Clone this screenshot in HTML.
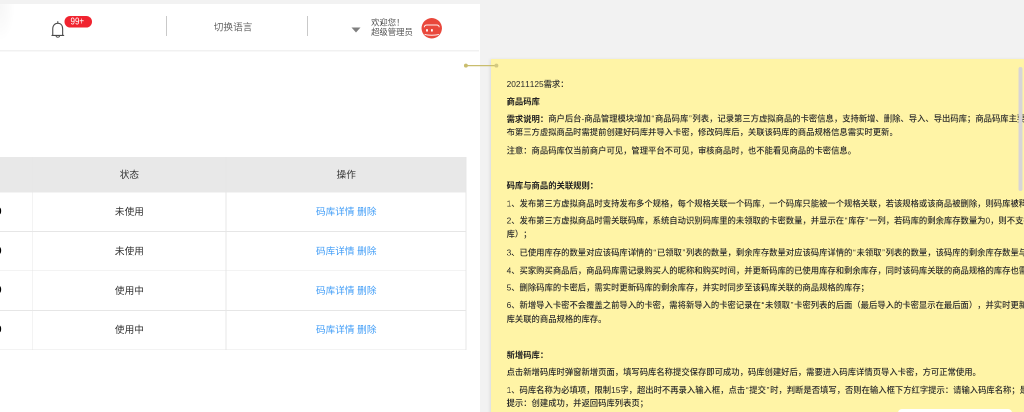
<!DOCTYPE html>
<html lang="zh-CN">
<head>
<meta charset="utf-8">
<title>商品码库</title>
<style>
html,body{margin:0;padding:0;}
body{width:1024px;height:412px;overflow:hidden;background:#f2f2f2;font-family:"Liberation Sans","Noto Sans CJK SC",sans-serif;}
#stage{position:absolute;left:0;top:0;width:2048px;height:824px;overflow:hidden;transform:scale(0.5);transform-origin:0 0;will-change:transform;background:#f2f2f2;}
#stage *{box-sizing:border-box;}
.abs{position:absolute;}
#page{left:0;top:8.2px;width:960px;height:820px;background:#fff;}
#hdr-border{left:0;top:100.4px;width:958px;height:2.8px;background:#f1f1f1;}
#hdr-shade{left:0;top:8.2px;width:40px;height:92.4px;background:radial-gradient(ellipse 30px 68px at 0 8px,rgba(0,0,0,0.03),rgba(0,0,0,0.015) 55%,rgba(0,0,0,0) 100%);}
#badge span{display:inline-block;transform:scale(1.04,1.32);transform-origin:0 50%;}
.sep{top:31.6px;width:2px;height:40.4px;background:#c9c9c9;}
#badge{left:129px;top:32px;width:55.2px;height:22.8px;border-radius:11.4px;background:#f0232f;color:#fff;font-size:15.4px;line-height:22.8px;padding-left:12.2px;white-space:nowrap;}
#lang{left:427.6px;top:38.8px;font-size:19.3px;line-height:31.2px;color:#666;white-space:nowrap;}
#tri{left:703.4px;top:55px;width:0;height:0;border-left:9.4px solid transparent;border-right:9.4px solid transparent;border-top:10.2px solid #7f7f7f;}
.uline{left:742.2px;font-size:16.7px;line-height:20px;color:#555;white-space:nowrap;}
/* table */
#thead{left:0;top:314.2px;width:932.8px;height:70.4px;background:#e8e8e8;}
.vline{top:314.2px;width:1.6px;height:385.2px;background:#e6e6e6;}
.hline{left:0;width:932.8px;height:1.6px;background:#e6e6e6;}
.cell{font-size:19.3px;line-height:30px;white-space:nowrap;text-align:center;color:#333;}
.c2{left:65.6px;width:386.4px;}
.c3{left:452px;width:480.8px;}
.lnk{color:#3f9cf7;}
.zero{left:-8.2px;width:14px;text-align:left;font-weight:bold;color:#000;-webkit-text-stroke:1.3px #000;margin-top:-1.2px;}
/* note */
#note{left:981.8px;top:118.4px;width:1080px;height:720px;background:#fff4a6;box-shadow:-2px 1px 6px rgba(0,0,0,0.10);overflow:hidden;}
.ln{text-spacing-trim:space-all;font-kerning:none;left:31.4px;margin-top:1.2px;font-size:16.65px;line-height:24px;color:#2b2b2b;font-weight:500;white-space:nowrap;height:24px;}
.q{display:inline-block;width:0.5em;text-align:center;}
.ln b{font-weight:bold;color:#222;position:relative;top:0.8px;}
#sbar{left:2037px;top:134px;width:7.8px;height:248px;border-radius:4px;background:#d8d5d8;}
#hbar{left:1796px;top:818px;width:228px;height:20px;border-radius:8px;background:#fff;}
</style>
</head>
<body>
<div id="stage">
  <div id="page" class="abs"></div>
  <div id="hdr-shade" class="abs"></div>
  <div id="hdr-border" class="abs"></div>

  <!-- bell -->
  <svg class="abs" style="left:100px;top:40px" width="32" height="40" viewBox="0 0 32 40">
    <path d="M5.5 30.5 V18 C5.5 10.5 10 6.5 15.6 6.5 C21.2 6.5 25.3 10.5 25.3 18 V30.5" fill="none" stroke="#4a4a4a" stroke-width="2.2"/>
    <path d="M3.8 30.8 H27.4" fill="none" stroke="#4a4a4a" stroke-width="2.2" stroke-linecap="round"/>
    <path d="M15.6 6.5 V3.4" stroke="#4a4a4a" stroke-width="2.2" stroke-linecap="round"/>
    <path d="M12.2 32 C12.6 35.2 18.6 35.2 19 32" fill="none" stroke="#4a4a4a" stroke-width="2"/>
  </svg>
  <div id="badge" class="abs"><span>99+</span></div>

  <div class="abs sep" style="left:332.4px"></div>
  <div id="lang" class="abs">切换语言</div>
  <div class="abs sep" style="left:614.4px"></div>

  <div id="tri" class="abs"></div>
  <div class="abs uline" style="top:35.6px">欢迎您！</div>
  <div class="abs uline" style="top:54.7px">超级管理员</div>

  <!-- avatar -->
  <svg class="abs" style="left:843.4px;top:35.7px" width="41" height="41" viewBox="0 0 41 41">
    <circle cx="20.5" cy="20.5" r="20.4" fill="#e9473b"/>
    <path d="M5.6 18.6 C5.6 15.2 7.6 14 11 14 H30 C33.4 14 35.4 15.2 35.4 18.6" fill="none" stroke="#fff" stroke-width="1.9" stroke-opacity="0.92"/>
    <rect x="9.2" y="22.4" width="3.6" height="4.6" fill="#fff"/>
    <rect x="19" y="22.4" width="3.6" height="4.6" fill="#fff"/>
    <path d="M6.2 32.6 C12 35 29 35 34.8 32.6" fill="none" stroke="#fff" stroke-width="2" stroke-opacity="0.9"/>
  </svg>

  <!-- table -->
  <div id="thead" class="abs"></div>
  <div class="abs vline" style="left:64.8px"></div>
  <div class="abs vline" style="left:451.2px"></div>
  <div class="abs vline" style="left:931.2px"></div>
  <div class="abs hline" style="top:462.2px"></div>
  <div class="abs hline" style="top:540.8px"></div>
  <div class="abs hline" style="top:620.2px"></div>
  <div class="abs hline" style="top:698.6px"></div>

  <div class="abs cell c2" style="top:335.2px">状态</div>
  <div class="abs cell c3" style="top:335.2px">操作</div>

  <div class="abs cell zero" style="top:409.4px">0</div>
  <div class="abs cell c2" style="top:409.4px">未使用</div>
  <div class="abs cell c3 lnk" style="top:409.4px">码库详情 删除</div>

  <div class="abs cell zero" style="top:488.0px">0</div>
  <div class="abs cell c2" style="top:488.0px">未使用</div>
  <div class="abs cell c3 lnk" style="top:488.0px">码库详情 删除</div>

  <div class="abs cell zero" style="top:566.6px">0</div>
  <div class="abs cell c2" style="top:566.6px">使用中</div>
  <div class="abs cell c3 lnk" style="top:566.6px">码库详情 删除</div>

  <div class="abs cell zero" style="top:645.4px">0</div>
  <div class="abs cell c2" style="top:645.4px">使用中</div>
  <div class="abs cell c3 lnk" style="top:645.4px">码库详情 删除</div>


  <!-- note -->
  <div id="note" class="abs">
    <div class="abs ln" style="top:37.6px">20211125需求：</div>
    <div class="abs ln" style="top:72.0px"><b>商品码库</b></div>
    <div class="abs ln" style="top:106.6px"><b>需求说明：</b>商户后台-商品管理模块增加<span class="q">“</span>商品码库<span class="q">”</span>列表，记录第三方虚拟商品的卡密信息，支持新增、删除、导入、导出码库；商品码库主要用于商户发</div>
    <div class="abs ln" style="top:133.4px">布第三方虚拟商品时需提前创建好码库并导入卡密，修改码库后，关联该码库的商品规格信息需实时更新。</div>
    <div class="abs ln" style="top:170.2px">注意：商品码库仅当前商户可见，管理平台不可见，审核商品时，也不能看见商品的卡密信息。</div>
    <div class="abs ln" style="top:239.8px"><b>码库与商品的关联规则：</b></div>
    <div class="abs ln" style="top:276.2px">1、发布第三方虚拟商品时支持发布多个规格，每个规格关联一个码库，一个码库只能被一个规格关联，若该规格或该商品被删除，则码库被释放；</div>
    <div class="abs ln" style="top:310px">2、发布第三方虚拟商品时需关联码库，系统自动识别码库里的未领取的卡密数量，并显示在<span class="q">“</span>库存<span class="q">”</span>一列，若码库的剩余库存数量为0，则不支持关联（需重新选择码</div>
    <div class="abs ln" style="top:337.8px">库）；</div>
    <div class="abs ln" style="top:374.6px">3、已使用库存的数量对应该码库详情的<span class="q">“</span>已领取<span class="q">”</span>列表的数量，剩余库存数量对应该码库详情的<span class="q">“</span>未领取<span class="q">”</span>列表的数量，该码库的剩余库存数量与商品</div>
    <div class="abs ln" style="top:410px">4、买家购买商品后，商品码库需记录购买人的昵称和购买时间，并更新码库的已使用库存和剩余库存，同时该码库关联的商品规格的库存也需更新；</div>
    <div class="abs ln" style="top:444.8px">5、删除码库的卡密后，需实时更新码库的剩余库存，并实时同步至该码库关联的商品规格的库存；</div>
    <div class="abs ln" style="top:479.8px">6、新增导入卡密不会覆盖之前导入的卡密，需将新导入的卡密记录在<span class="q">“</span>未领取<span class="q">”</span>卡密列表的后面（最后导入的卡密显示在最后面），并实时更新码</div>
    <div class="abs ln" style="top:507.2px">库关联的商品规格的库存。</div>
    <div class="abs ln" style="top:578.4px"><b>新增码库：</b></div>
    <div class="abs ln" style="top:613.6px">点击新增码库时弹窗新增页面，填写码库名称提交保存即可成功，码库创建好后，需要进入码库详情页导入卡密，方可正常使用。</div>
    <div class="abs ln" style="top:649.8px">1、码库名称为必填项，限制15字，超出时不再录入输入框，点击<span class="q">“</span>提交<span class="q">”</span>时，判断是否填写，否则在输入框下方红字提示：请输入码库名称；是则</div>
    <div class="abs ln" style="top:675.8px">提示：创建成功，并返回码库列表页；</div>
  </div>
  <!-- connector -->
  <svg class="abs" style="left:920px;top:120px" width="90" height="24" viewBox="0 0 90 24">
    <path d="M11.8 11.2 H72.8" stroke="#c9bd6e" stroke-width="2.4"/>
    <circle cx="11.8" cy="11.2" r="3.9" fill="#c9bd6e"/>
    <circle cx="72.8" cy="11.2" r="3.9" fill="#d3c981"/>
  </svg>
  <div id="sbar" class="abs"></div>
  <div id="hbar" class="abs"></div>
</div>
</body>
</html>
